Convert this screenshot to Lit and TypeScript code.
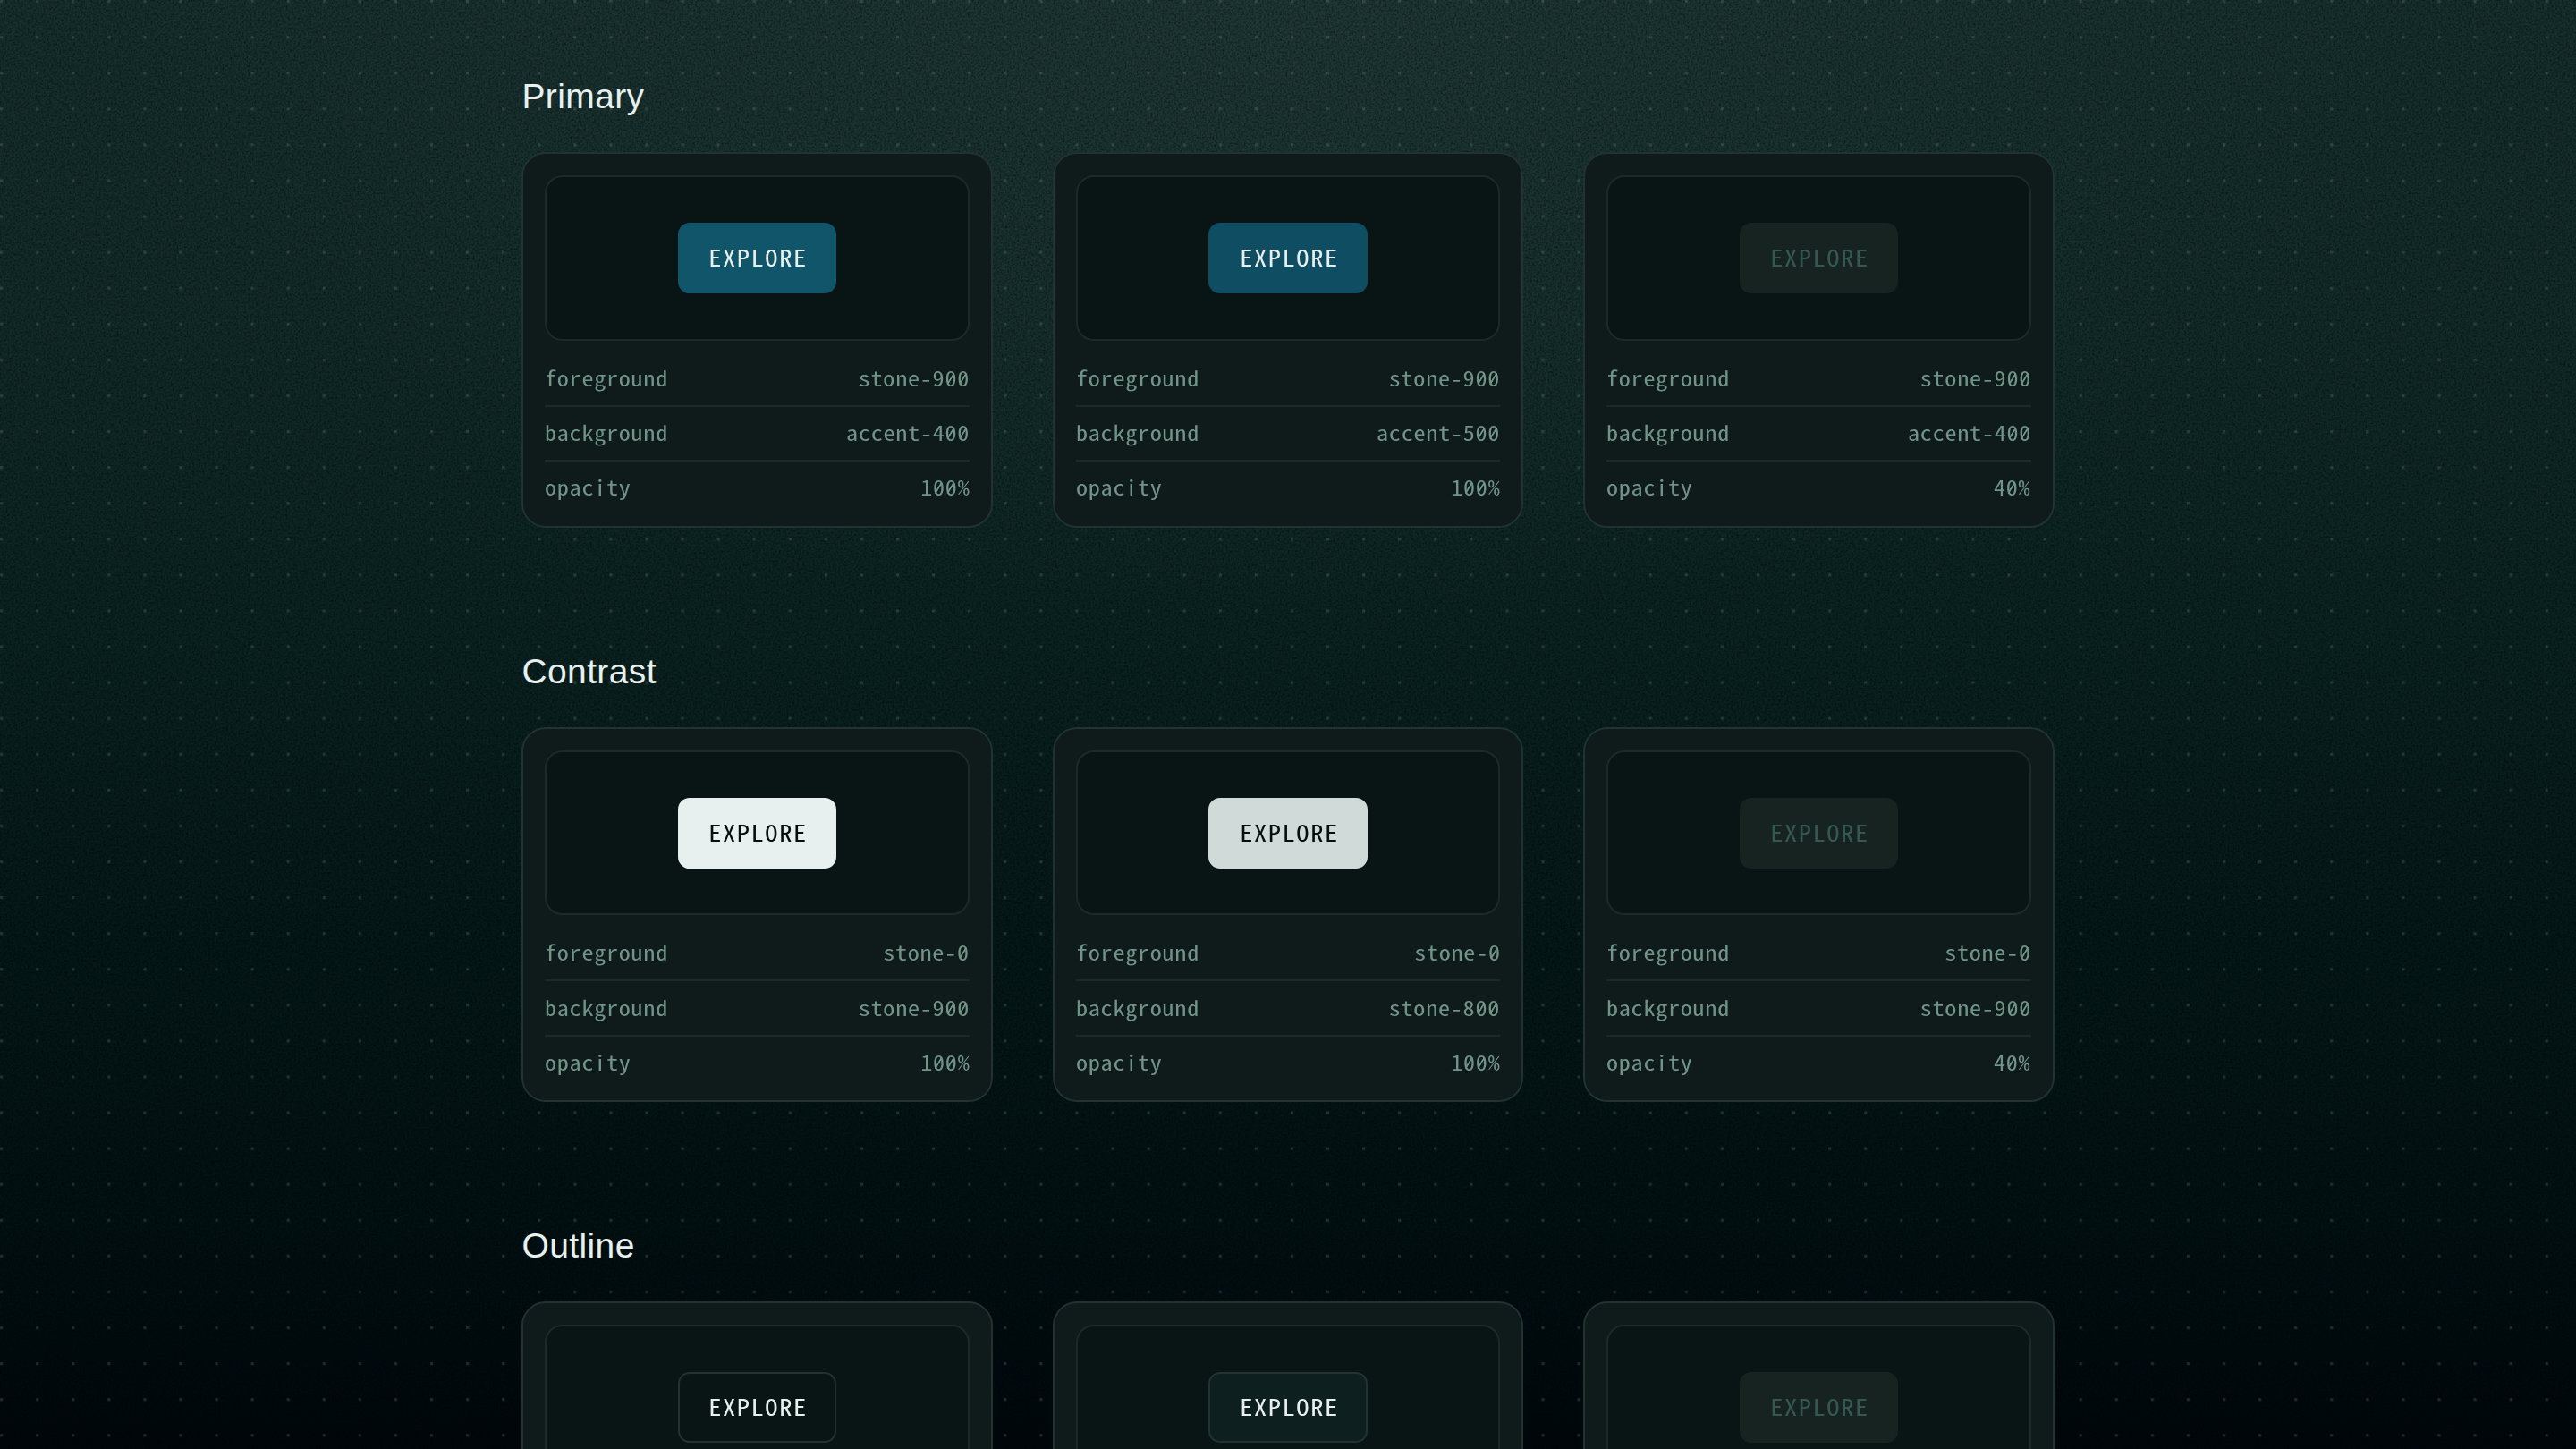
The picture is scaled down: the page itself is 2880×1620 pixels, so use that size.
import { LitElement, html, css, svg } from 'lit';
import { customElement, property } from 'lit/decorators.js';
import { classMap } from 'lit/directives/class-map.js';

type Variant =
  | 'primary'
  | 'primary-hover'
  | 'contrast'
  | 'contrast-hover'
  | 'outline'
  | 'outline-hover'
  | 'disabled';

interface ButtonSpec {
  variant: Variant;
  tokens: Record<string, string>;
}

interface Group {
  title: string;
  items: ButtonSpec[];
}

const groups: Group[] = [
  {
    title: 'Primary',
    items: [
      { variant: 'primary', tokens: { foreground: 'stone-900', background: 'accent-400', opacity: '100%' } },
      { variant: 'primary-hover', tokens: { foreground: 'stone-900', background: 'accent-500', opacity: '100%' } },
      { variant: 'disabled', tokens: { foreground: 'stone-900', background: 'accent-400', opacity: '40%' } },
    ],
  },
  {
    title: 'Contrast',
    items: [
      { variant: 'contrast', tokens: { foreground: 'stone-0', background: 'stone-900', opacity: '100%' } },
      { variant: 'contrast-hover', tokens: { foreground: 'stone-0', background: 'stone-800', opacity: '100%' } },
      { variant: 'disabled', tokens: { foreground: 'stone-0', background: 'stone-900', opacity: '40%' } },
    ],
  },
  {
    title: 'Outline',
    items: [
      { variant: 'outline', tokens: {} },
      { variant: 'outline-hover', tokens: {} },
      { variant: 'disabled', tokens: {} },
    ],
  },
];

@customElement('explore-button')
class ExploreButton extends LitElement {
  @property() variant: Variant = 'primary';

  static styles = css`
    :host {
      display: block;
    }
    .button {
      display: flex;
      align-items: center;
      justify-content: center;
      box-sizing: border-box;
      width: 177.4px;
      height: 79.2px;
      margin: 0;
      padding: 0 0 3px 2px;
      border: 2px solid transparent;
      border-radius: 13px;
      background: none;
      color: #e7f0ee;
      font-family: 'Noto Sans Mono CJK SC', 'DejaVu Sans Mono', monospace;
      font-size: 25px;
      line-height: 36px;
      letter-spacing: 1.35px;
    }
    .label {
      transform: scaleX(1.14);
    }
    .primary {
      background: #11556b;
      border-color: #11556b;
    }
    .primary-hover {
      background: #0f4e62;
      border-color: #0f4e62;
    }
    .contrast {
      background: #e7f0ee;
      border-color: #e7f0ee;
      color: #040f10;
    }
    .contrast-hover {
      background: #d0dad8;
      border-color: #d0dad8;
      color: #040f10;
    }
    .outline {
      border-color: #213231;
    }
    .outline-hover {
      background: #0d1f1e;
      border-color: #213231;
    }
    .disabled {
      background: #172321;
      border-color: #172321;
      color: #365853;
    }
  `;

  render() {
    return html`
      <button
        class=${classMap({ button: true, [this.variant]: true })}
        ?disabled=${this.variant === 'disabled'}
      >
        <span class="label">EXPLORE</span>
      </button>
    `;
  }
}

@customElement('spec-card')
class SpecCard extends LitElement {
  @property({ attribute: false }) spec!: ButtonSpec;

  static styles = css`
    :host {
      display: block;
    }
    .card {
      box-sizing: border-box;
      height: 419.4px;
      padding: 24px;
      border: 2px solid #213231;
      border-radius: 27px;
      background: #0f1a1a;
    }
    .preview {
      display: flex;
      align-items: center;
      justify-content: center;
      box-sizing: border-box;
      height: 184.6px;
      margin-bottom: 13px;
      border: 2px solid #1b2a29;
      border-radius: 20px;
      background: #081514;
    }
    .row {
      display: flex;
      align-items: center;
      justify-content: space-between;
      box-sizing: border-box;
      height: 61.1px;
      padding-bottom: 3px;
      border-bottom: 2px solid #1b2a29;
      color: #719489;
      font-family: 'Noto Sans Mono CJK SC', 'DejaVu Sans Mono', monospace;
      font-size: 23px;
      line-height: 32px;
      letter-spacing: 0.6px;
    }
    .row:last-child {
      border-bottom-color: transparent;
    }
    .label {
      transform: scaleX(1.14);
      transform-origin: left;
    }
    .value {
      transform: scaleX(1.14);
      transform-origin: right;
    }
    /* the mono font has a plain zero, so the slash is painted behind it */
    .zero {
      background: linear-gradient(to bottom right, transparent 41%, #719489 46%, #719489 54%, transparent 59%)
        2.2px 12px / 7px 13px no-repeat;
    }
  `;

  slashZeros(value: string) {
    return value.split('').map((char) => (char === '0' ? html`<span class="zero">0</span>` : char));
  }

  render() {
    return html`
      <div class="card">
        <div class="preview">
          <explore-button .variant=${this.spec.variant}></explore-button>
        </div>
        ${Object.entries(this.spec.tokens).map(
          ([label, value]) => html`
            <div class="row">
              <span class="label">${label}</span>
              <span class="value">${this.slashZeros(value)}</span>
            </div>
          `
        )}
      </div>
    `;
  }
}

@customElement('app-root')
class AppRoot extends LitElement {
  static styles = css`
    :host {
      display: block;
    }
    .page {
      position: relative;
      box-sizing: border-box;
      width: 2880px;
      height: 1620px;
      padding: 84px 583.4px 0;
      overflow: hidden;
      background:
        radial-gradient(ellipse 1300px 700px at 50% 0, rgba(60, 80, 76, 0.26), rgba(60, 80, 76, 0)),
        linear-gradient(#16302d, #122b29 22%, #0a2321 44%, #051918 64%, #021113 84%, #00070c);
    }
    /* dot grid and grain lie behind the cards */
    .backdrop {
      position: absolute;
      inset: 0;
      width: 100%;
      height: 100%;
    }
    .content {
      position: relative;
    }
    .group {
      height: 642.5px;
    }
    .title {
      margin: 0;
      height: 86.3px;
      color: #e7f0ee;
      font-family: 'Liberation Sans', Arial, sans-serif;
      font-size: 39px;
      font-weight: 400;
      line-height: 48px;
      letter-spacing: 0.4px;
    }
    .cards {
      display: grid;
      grid-template-columns: repeat(3, 1fr);
      gap: 66.6px;
    }
  `;

  backdrop = svg`
    <defs>
      <pattern id="dots" width="40.08" height="40.08" patternUnits="userSpaceOnUse">
        <rect x="0" y="0" width="3.2" height="3.2" fill="#8fb0aa" fill-opacity="0.2" />
      </pattern>
      <filter id="grain" x="0" y="0" width="100%" height="100%">
        <feTurbulence type="fractalNoise" baseFrequency="0.45" numOctaves="2" seed="4" />
        <feColorMatrix values="0 0 0 0 0  0 0 0 0 0  0 0 0 0 0  1.6 0 0 0 -0.6" />
      </filter>
    </defs>
    <rect width="2880" height="1620" filter="url(#grain)" opacity="0.6" />
    <rect width="2880" height="1620" fill="url(#dots)" />
  `;

  render() {
    return html`
      <div class="page">
        <svg class="backdrop" viewBox="0 0 2880 1620">${this.backdrop}</svg>
        <div class="content">
          ${groups.map(
            (group) => html`
              <section class="group">
                <h2 class="title">${group.title}</h2>
                <div class="cards">
                  ${group.items.map((item) => html`<spec-card .spec=${item}></spec-card>`)}
                </div>
              </section>
            `
          )}
        </div>
      </div>
    `;
  }
}
